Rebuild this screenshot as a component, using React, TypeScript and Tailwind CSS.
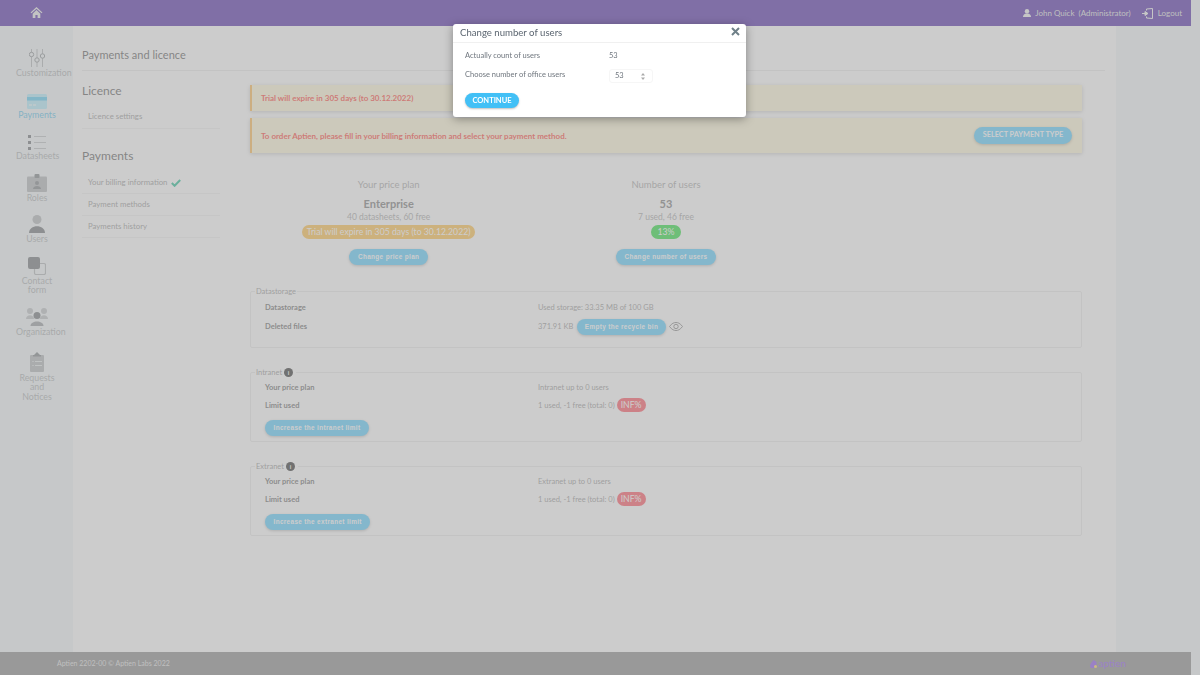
import React from "react";

const font = { fontFamily: "Lato, 'Open Sans', sans-serif" };

function SideItem({ icon, label, active, className }: { icon: React.ReactNode; label: React.ReactNode; active?: boolean; className?: string }) {
  return (
    <div className={`w-[42px] ml-[16px] text-center text-[8.8px] leading-[9.3px] ${active ? "text-[#42b8e8]" : "text-[#a0a4a6]"} ${className ?? ""}`}>
      <div className="h-[20px] mb-[1px] flex items-end justify-center">{icon}</div>
      {label}
    </div>
  );
}

const IconCustomization = (
  <svg width="16" height="18" viewBox="0 0 16 18" fill="none" stroke="#7b8185" strokeWidth="1">
    <path d="M2.500 0v18M8 0v18M13.500 0v18" stroke="#a6abae" />
    <circle cx="2.500" cy="5.500" r="2.200" fill="#eff5f7" />
    <circle cx="8" cy="11" r="2.200" fill="#eff5f7" />
    <circle cx="13.500" cy="7" r="2.200" fill="#eff5f7" />
  </svg>
);
const IconPayments = (
  <svg width="20" height="15" viewBox="0 0 20 15">
    <rect width="20" height="15" rx="1.500" fill="#a5e9fb" />
    <rect y="3" width="20" height="3.500" fill="#3fc4f2" />
    <rect x="2" y="10.500" width="3" height="1" fill="#fff" />
    <rect x="6" y="10.500" width="3" height="1" fill="#fff" />
  </svg>
);
const IconDatasheets = (
  <svg width="18" height="15" viewBox="0 0 18 15">
    <rect x="0" y="0" width="3" height="3" fill="#5a6064" />
    <rect x="0" y="6" width="3" height="3" fill="#5a6064" />
    <rect x="0" y="12" width="3" height="3" fill="#5a6064" />
    <rect x="6" y="1" width="12" height="1" fill="#b4b8bb" />
    <rect x="6" y="7" width="12" height="1" fill="#b4b8bb" />
    <rect x="6" y="13" width="12" height="1" fill="#b4b8bb" />
  </svg>
);
const IconRoles = (
  <svg width="20" height="18" viewBox="0 0 20 18">
    <rect y="2.500" width="20" height="15.500" rx="1" fill="#a6abae" />
    <rect x="7.500" y="0" width="5" height="4" rx="1" fill="#6b7175" />
    <circle cx="10" cy="9" r="2" fill="#6b7175" />
    <path d="M6 15c0-4 8-4 8 0z" fill="#6b7175" />
  </svg>
);
const IconUsers = (
  <svg width="16" height="18" viewBox="0 0 16 18">
    <circle cx="8" cy="4.500" r="4.500" fill="#a6abae" />
    <path d="M0 18c0-9 16-9 16 0z" fill="#5a6064" />
  </svg>
);
const IconContact = (
  <svg width="18" height="18" viewBox="0 0 18 18">
    <rect x="6.500" y="6.500" width="11" height="11" rx="1.500" fill="none" stroke="#a6abae" strokeWidth="1.200" />
    <rect x="0" y="0" width="12" height="12" rx="2" fill="#5a6064" />
  </svg>
);
const IconOrganization = (
  <svg width="22" height="18" viewBox="0 0 22 18">
    <circle cx="4" cy="3" r="3" fill="#b4b8bb" />
    <circle cx="18" cy="3" r="3" fill="#b4b8bb" />
    <path d="M0 11c0-5 8-5 8 0zM14 11c0-5 8-5 8 0z" fill="#b4b8bb" />
    <circle cx="11" cy="7.500" r="3.500" fill="#5a6064" />
    <path d="M4.500 18c0-6 13-6 13 0z" fill="#878c90" />
  </svg>
);
const IconRequests = (
  <svg width="14" height="20" viewBox="0 0 14 20">
    <rect y="3" width="14" height="17" rx="1" fill="#a6abae" />
    <path d="M4 3l3-3 3 3z" fill="#6b7175" />
    <rect x="3" y="3" width="8" height="1.500" fill="#6b7175" />
    <rect x="5" y="9" width="7" height=".8" fill="#eff5f7" />
    <rect x="5" y="13" width="7" height=".8" fill="#eff5f7" />
    <rect x="2.500" y="9" width="1" height="1" fill="#eff5f7" />
    <rect x="2.500" y="13" width="1" height="1" fill="#eff5f7" />
  </svg>
);

function Btn({ children, className }: { children: React.ReactNode; className?: string }) {
  return (
    <button
      className={`h-[16px] rounded-full bg-[#42c8ff] text-white text-[6.4px] font-bold tracking-[0.35px] shadow-[0_1px_3px_rgba(0,0,0,0.3)] whitespace-nowrap ${className ?? "px-[9px]"}`}
      style={{ fontFamily: "'Liberation Sans', sans-serif" }}
    >
      {children}
    </button>
  );
}

function InfoDot() {
  return (
    <span className="inline-flex w-[9px] h-[9px] rounded-full bg-[#111] text-white text-[6px] font-bold items-center justify-center leading-none">
      i
    </span>
  );
}

function Row({ label, children }: { label: string; children: React.ReactNode }) {
  return (
    <div className="flex items-center">
      <div className="w-[273px] font-bold text-[#555]">{label}</div>
      <div className="flex items-center text-[#888]">{children}</div>
    </div>
  );
}

function Pill({ children, className }: { children: React.ReactNode; className: string }) {
  return (
    <span className={`block h-[14px] leading-[14px] rounded-full text-white text-[8.7px] ${className}`}>{children}</span>
  );
}

function LimitBox({ title, plan, button, className }: { title: string; plan: string; button: string; className?: string }) {
  return (
    <fieldset className={`border border-[#e6e6e6] rounded-[2px] pl-[14px] h-[74px] ${className ?? ""}`}>
      <legend className="ml-[-10px] px-[1px] text-[7.5px] leading-[9px] text-[#888] flex items-center gap-[2px] pr-[3px]">
        {title} <InfoDot />
      </legend>
      <div className="text-[7.5px] mt-[5.5px] flex flex-col gap-[6.500px] leading-[9px]">
        <Row label="Your price plan">{plan}</Row>
        <Row label="Limit used">
          1 used, -1 free (total: 0)
          <Pill className="bg-[#ff3c4a] ml-[2px] px-[4px]">INF%</Pill>
        </Row>
      </div>
      <Btn className="mt-[7.5px] block px-[8.500px]">{button}</Btn>
    </fieldset>
  );
}

function PlanCol({ title, main, sub, pill, button }: { title: string; main: string; sub: string; pill: React.ReactNode; button: string }) {
  return (
    <div className="flex flex-col items-center">
      <div className="text-[9.5px] leading-[12px] text-[#999]">{title}</div>
      <div className="text-[11px] leading-[14px] font-bold text-[#666] mt-[6px]">{main}</div>
      <div className="text-[8.5px] leading-[10px] text-[#999] mt-[0.5px]">{sub}</div>
      <div className="mt-[3.500px] h-[14px] flex">{pill}</div>
      <Btn className="mt-[10px] px-[9px]">{button}</Btn>
    </div>
  );
}

export default function App() {
  return (
    <div className="relative w-[1200px] h-[675px] overflow-hidden bg-[#eff5f7] flex flex-col" style={font}>
      <header className="w-[1191px] h-[26px] bg-[#370d9b] flex items-center shrink-0 text-white">
        <div className="w-[73px] flex justify-center pb-[1px]">
          <svg width="13" height="11" viewBox="0 0 14 13" fill="#e6e6e6">
            <path d="M7 0L0 6.500l1 1L7 2l6 5.500 1-1zM2.500 8v5h3.200V9.500h2.600V13h3.200V8L7 3.500z" />
          </svg>
        </div>
        <div className="ml-auto flex items-center text-[8px] pr-[9px] text-[#ddd]">
          <svg width="8" height="8" viewBox="0 0 8 8" fill="#eee" className="mr-[4px]">
            <circle cx="4" cy="2.200" r="2.200" />
            <path d="M0 8c0-2 1-3 3-3.500h2C7 5 8 6 8 8z" />
          </svg>
          <span>John Quick</span>
          <span className="ml-[4px]">(Administrator)</span>
          <svg width="11" height="11" viewBox="0 0 11 11" fill="none" stroke="#eee" strokeWidth="1" className="ml-[11px] mr-[5px]">
            <path d="M4.500 2.500V1l6-.5v10l-6-.5V8.500" />
            <path d="M0 5.500h3M3 3.500v4L6 5.500z" fill="#eee" />
          </svg>
          <span>Logout</span>
        </div>
      </header>

      <div className="flex-1 flex min-h-0">
        <nav className="w-[73px] shrink-0 pt-[21px] flex flex-col gap-[11.3px] whitespace-nowrap">
          <SideItem icon={IconCustomization} label="Customization" />
          <SideItem icon={IconPayments} label="Payments" active />
          <SideItem icon={IconDatasheets} label="Datasheets" />
          <SideItem icon={IconRoles} label="Roles" />
          <SideItem icon={IconUsers} label="Users" />
          <SideItem icon={IconContact} label={<>Contact<br />form</>} />
          <SideItem icon={IconOrganization} label="Organization" />
          <SideItem icon={IconRequests} label={<>Requests<br />and<br />Notices</>} className="pt-[4.500px]" />
        </nav>

        <main className="w-[1043px] shrink-0 bg-white pl-[9px] pr-[11px]">
          <h1 className="text-[11px] leading-[14px] text-[#444] pt-[22px] pb-[8px] border-b border-[#e8e8e8]">Payments and licence</h1>
          <div className="flex">
            <aside className="w-[138px] shrink-0">
              <h2 className="text-[12px] leading-[15px] text-[#444] mt-[12px]">Licence</h2>
              <ul className="mt-[8px] text-[7.8px] text-[#888]">
                <li className="h-[23px] pl-[6px] flex items-center border-b border-[#eeeeee]">Licence settings</li>
              </ul>
              <h2 className="text-[12px] leading-[15px] text-[#444] mt-[19px]">Payments</h2>
              <ul className="mt-[9px] text-[7.8px] text-[#888]">
                <li className="h-[22px] pl-[6px] flex items-center gap-[4px] border-b border-[#eeeeee]">
                  Your billing information
                  <svg width="10" height="8" viewBox="0 0 10 8" fill="none" stroke="#00b482" strokeWidth="2">
                    <path d="M.8 4l2.800 2.800L9.200 1" />
                  </svg>
                </li>
                <li className="h-[22px] pl-[6px] flex items-center border-b border-[#eeeeee]">Payment methods</li>
                <li className="h-[22px] pl-[6px] flex items-center border-b border-[#eeeeee]">Payments history</li>
              </ul>
            </aside>

            <section className="ml-[30px] w-[832px] shrink-0 pt-[14px]">
              <div className="h-[26px] bg-[#fff6d2] border-l-2 border-[#ffb13c] pl-[9px] flex items-center text-[8px] font-bold text-[#ff2a1a] shadow-[0_1px_4px_rgba(0,0,0,0.25)]">
                Trial will expire in 305 days (to 30.12.2022)
              </div>
              <div className="mt-[7px] h-[35px] bg-[#fff6d2] border-l-2 border-[#ffb13c] pl-[9px] pr-[10px] flex items-center justify-between text-[8px] font-bold text-[#ff2a1a] shadow-[0_1px_4px_rgba(0,0,0,0.25)]">
                To order Aptien, please fill in your billing information and select your payment method.
                <button className="h-[17px] w-[98px] rounded-full bg-[#42c8ff] text-white text-[7.3px] font-bold shadow-[0_1px_3px_rgba(0,0,0,0.3)]">SELECT PAYMENT TYPE</button>
              </div>

              <div className="grid grid-cols-3 mt-[26px]">
                <PlanCol
                  title="Your price plan"
                  main="Enterprise"
                  sub="40 datasheets, 60 free"
                  pill={<Pill className="bg-[#ffb830] px-[4.500px]">Trial will expire in 305 days (to 30.12.2022)</Pill>}
                  button="Change price plan"
                />
                <PlanCol
                  title="Number of users"
                  main="53"
                  sub="7 used, 46 free"
                  pill={<Pill className="bg-[#08da22] px-[6px]">13%</Pill>}
                  button="Change number of users"
                />
              </div>

              <fieldset className="mt-[22px] border border-[#e6e6e6] rounded-[2px] pl-[14px] h-[61px]">
                <legend className="ml-[-10px] px-[1px] text-[7.5px] leading-[9px] text-[#888]">Datastorage</legend>
                <div className="text-[7.5px] mt-[6.5px] leading-[9px]">
                  <Row label="Datastorage">Used storage: 33.35 MB of 100 GB</Row>
                  <div className="mt-[7px]">
                    <Row label="Deleted files">
                      371.91 KB
                      <Btn className="ml-[3.500px] px-[8px]">Empty the recycle bin</Btn>
                      <svg width="14" height="9" viewBox="0 0 14 9" fill="none" stroke="#666" strokeWidth=".9" className="ml-[3px]">
                        <path d="M.5 4.500C3 1.200 5 .5 7 .5s4 .7 6.500 4c-2.500 3.300-4.500 4-6.500 4S3 7.800.5 4.500z" />
                        <circle cx="7" cy="4.500" r="2.200" />
                      </svg>
                    </Row>
                  </div>
                </div>
              </fieldset>

              <LimitBox className="mt-[20px]" title="Intranet" plan="Intranet up to 0 users" button="Increase the intranet limit" />
              <LimitBox className="mt-[20px]" title="Extranet" plan="Extranet up to 0 users" button="Increase the extranet limit" />
            </section>
          </div>
        </main>
      </div>

      <footer className="w-[1191px] h-[23px] bg-[#797979] shrink-0 flex items-center justify-between pl-[57px] pr-[65px] text-[7px] text-[#ddd]">
        <span>Aptien 2202-00 © Aptien Labs 2022</span>
        <span className="flex items-center gap-[1px] text-[#7c3aed] text-[10px]">
          <svg width="7" height="8" viewBox="0 0 7 8">
            <path d="M3.500 0C2 2 0 4 0 6c0 1 .8 2 2 2h4.500V2z" fill="#7c3aed" />
            <circle cx="5.500" cy="6.500" r="1.500" fill="#ffd23c" />
          </svg>
          aptien
        </span>
      </footer>

      {/* dimmed backdrop behind the dialog */}
      <div className="absolute inset-0 bg-[#adadad]/62 backdrop-blur-[0.6px]" />

      <div className="absolute left-[453px] top-[24px] w-[293px] h-[93px] bg-white rounded-[3px] shadow-[0_2px_10px_rgba(0,0,0,0.35)] text-[7.5px] text-[#6f767e]">
        <div className="h-[19px] border-b border-[#f0f0f0] pl-[7px] pr-[6px] flex items-center justify-between">
          <span className="text-[9.6px] text-[#5b6570]">Change number of users</span>
          <svg width="9" height="9" viewBox="0 0 9 9" stroke="#6f8088" strokeWidth="2" className="mb-[3px]">
            <path d="M1 1l7 7M8 1l-7 7" />
          </svg>
        </div>
        <div className="pl-[12px] pt-[8px]">
          <div className="flex items-center h-[9px]">
            <span className="w-[144px]">Actually count of users</span>
            <span>53</span>
          </div>
          <div className="flex items-start mt-[9px]">
            <span className="w-[144px] leading-[9px] mt-[0.5px]">Choose number of office users</span>
            <div className="w-[44px] h-[14px] border border-[#f6f6f6] rounded-[3px] pl-[5px] pr-[7px] flex items-center justify-between">
              <span>53</span>
              <svg width="4" height="7" viewBox="0 0 4 7" fill="#aaa">
                <path d="M2 0l2 2.500H0zM2 7L0 4.500h4z" />
              </svg>
            </div>
          </div>
          <button className="mt-[10px] h-[15px] w-[54px] rounded-full bg-[#42c0f6] text-white text-[7.5px] font-bold shadow-[0_1px_2px_rgba(0,0,0,0.25)]">CONTINUE</button>
        </div>
      </div>
    </div>
  );
}
